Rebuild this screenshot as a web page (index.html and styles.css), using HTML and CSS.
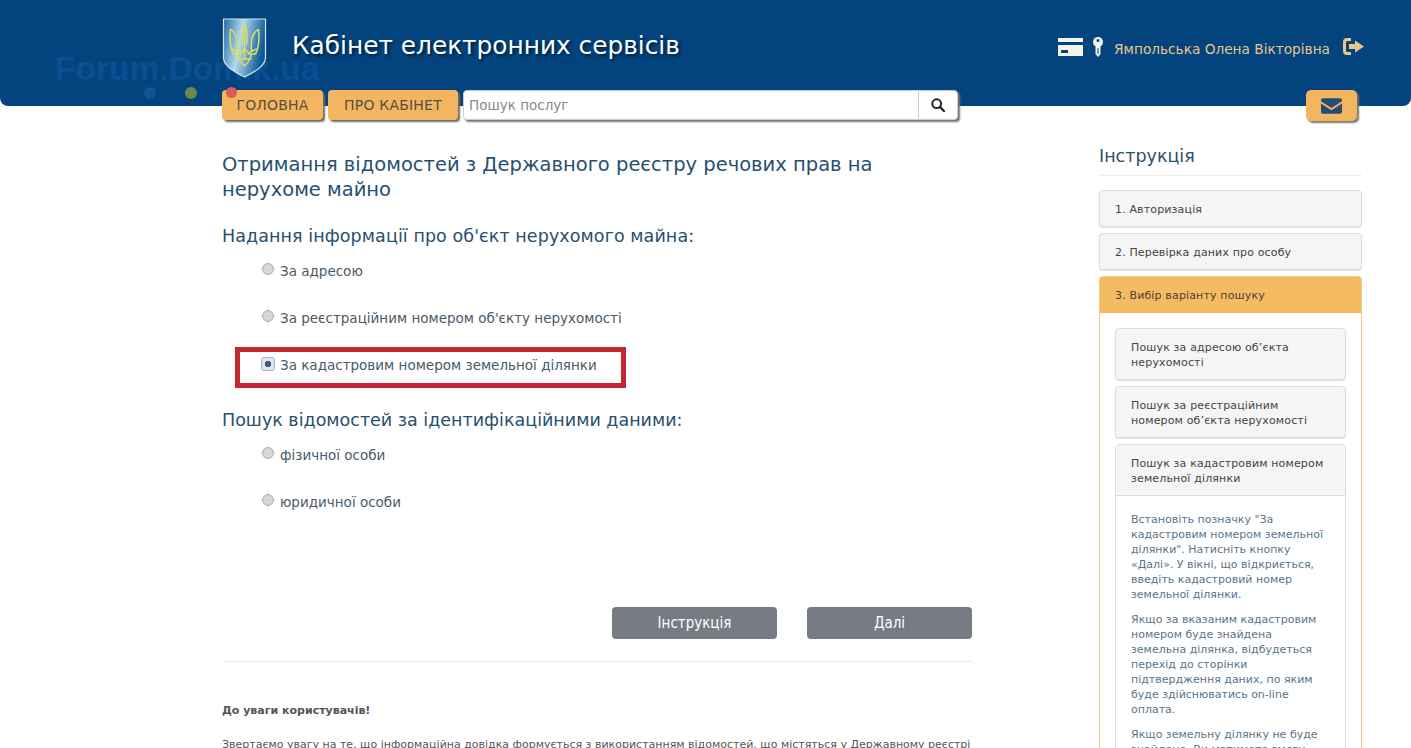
FILE: index.html
```html
<!DOCTYPE html>
<html lang="uk">
<head>
<meta charset="utf-8">
<title>Кабінет електронних сервісів</title>
<link rel="stylesheet" href="styles.css">
</head>
<body>
<header class="top">
  <div class="watermark">
    <span class="wm-text">Forum.Domik.ua</span>
    <span class="wm-dots"><i class="dot dot-blue"></i><i class="dot dot-green"></i><i class="dot dot-red"></i></span>
  </div>
  <div class="top-inner">
    <svg class="crest" viewBox="0 0 44 60" aria-hidden="true">
      <defs>
        <linearGradient id="sh" x1="0" y1="0" x2="1" y2="0.25">
          <stop offset="0" stop-color="#1c6ba6"/><stop offset="0.45" stop-color="#b4d9ee"/><stop offset="1" stop-color="#0d5a97"/>
        </linearGradient>
      </defs>
      <path d="M1 1H43V40Q43 49 22 59Q1 49 1 40Z" fill="url(#sh)" stroke="#d5e6f2" stroke-width="1.2"/>
      <path d="M22 6V42M22 6C19 13 19 20 20 27M22 6C25 13 25 20 24 27M8 11C7 20 8 30 11 36H18M36 11C37 20 36 30 33 36H26M8 11C14 15 16 24 15 33M36 11C30 15 28 24 29 33M10 31L18 35L22 31L26 35L34 31M15 36C16 43 20 46 22 48C24 46 28 43 29 36M15 41H29" fill="none" stroke="#dcdc62" stroke-width="1.5"/>
    </svg>
    <div class="brand">Кабінет електронних сервісів</div>
    <div class="user">
      <svg class="ic-card" viewBox="0 0 25 18" aria-hidden="true"><path d="M0 0H25V4H0ZM0 7H25V18H0ZM3 12V15H10V12Z" fill="#f4f6ee" fill-rule="evenodd"/></svg>
      <svg class="ic-key" viewBox="0 0 10 20" aria-hidden="true"><path d="M5 0A5 5 0 0 1 7.500 9.300V17L5 20L2.500 17V9.300A5 5 0 0 1 5 0ZM5 2A1.500 1.500 0 1 0 5 5A1.500 1.500 0 1 0 5 2ZM4.500 11V17H5.500V11Z" fill="#f4f6ee" fill-rule="evenodd"/></svg>
      <span class="user-name">Ямпольська Олена Вікторівна</span>
      <svg class="ic-exit" viewBox="0 0 21 17" aria-hidden="true"><path d="M8 0H4Q0 0 0 4V13Q0 17 4 17H8V14H4.500Q3 14 3 12.500V4.500Q3 3 4.500 3H8ZM12 2.500L21 8.500L12 14.500V11H6V6H12Z" fill="#e9c48b" fill-rule="evenodd"/></svg>
    </div>
  </div>
</header>

<div class="wrap">
  <nav class="nav">
    <a class="btn-nav">ГОЛОВНА</a>
    <a class="btn-nav btn-nav-2">ПРО КАБІНЕТ</a>
    <div class="search">
      <span class="search-field">Пошук послуг</span>
      <span class="search-btn">
        <svg viewBox="0 0 14 14" width="14" height="14" aria-hidden="true"><circle cx="5.700" cy="5.700" r="4.400" fill="none" stroke="#222" stroke-width="2"/><path d="M9 9L13 13" stroke="#222" stroke-width="2.400" stroke-linecap="round"/></svg>
      </span>
    </div>
    <a class="btn-mail">
      <svg viewBox="0 0 22 16" width="21" height="16" aria-hidden="true"><path d="M2 0H20Q22 0 22 2V3L11 10L0 3V2Q0 0 2 0ZM0 5.500L11 12.500L22 5.500V14Q22 16 20 16H2Q0 16 0 14Z" fill="#234e73"/></svg>
    </a>
  </nav>

  <div class="columns">
    <main class="main">
      <h1 class="title">Отримання відомостей з Державного реєстру речових прав на нерухоме майно</h1>

      <h2 class="subtitle subtitle-1">Надання інформації про об'єкт нерухомого майна:</h2>
      <div class="options">
        <label class="opt"><i class="radio"></i>За адресою</label>
        <label class="opt"><i class="radio"></i>За реєстраційним номером об'єкту нерухомості</label>
        <label class="opt opt-marked"><i class="radio radio-on"></i>За кадастровим номером земельної ділянки</label>
      </div>

      <h2 class="subtitle subtitle-2">Пошук відомостей за ідентифікаційними даними:</h2>
      <div class="options">
        <label class="opt"><i class="radio"></i>фізичної особи</label>
        <label class="opt"><i class="radio"></i>юридичної особи</label>
      </div>

      <div class="actions">
        <a class="btn-grey">Інструкція</a>
        <a class="btn-grey">Далі</a>
      </div>
      <hr class="rule">
      <p class="note-head">До уваги користувачів!</p>
      <p class="note">Звертаємо увагу на те, що інформаційна довідка формується з використанням відомостей, що містяться у Державному реєстрі речових прав на нерухоме майно.</p>
    </main>

    <aside class="side">
      <h3 class="side-title">Інструкція</h3>
      <div class="panel">1. Авторизація</div>
      <div class="panel">2. Перевірка даних про особу</div>
      <div class="panel-open">
        <div class="panel-open-head">3. Вибір варіанту пошуку</div>
        <div class="panel-open-body">
          <div class="panel panel-inner">Пошук за адресою об’єкта нерухомості</div>
          <div class="panel panel-inner">Пошук за реєстраційним номером об’єкта нерухомості</div>
          <div class="sub">
            <div class="sub-head">Пошук за кадастровим номером земельної ділянки</div>
            <div class="sub-body">
              <p>Встановіть позначку "За кадастровим номером земельної ділянки". Натисніть кнопку «Далі». У вікні, що відкриється, введіть кадастровий номер земельної ділянки.</p>
              <p>Якщо за вказаним кадастровим номером буде знайдена земельна ділянка, відбудеться перехід до сторінки підтвердження даних, по яким буде здійснюватись on-line оплата.</p>
              <p>Якщо земельну ділянку не буде знайдено, Ви матимете змогу повернутися назад.</p>
            </div>
          </div>
        </div>
      </div>
    </aside>
  </div>
</div>
```
FILE: styles.css
```css
* { box-sizing: border-box; }
html, body { margin: 0; height: 748px; overflow: hidden; }
body {
  background: #fff;
  font-family: "DejaVu Sans", Verdana, sans-serif;
  color: #3c5266;
}
.top {
  height: 106px;
  background: #03447e;
  border-radius: 0 0 8px 8px;
  position: relative;
}
.watermark {
  position: absolute;
  left: 55px;
  top: 52px;
  width: 270px;
}
.wm-text {
  display: block;
  font: bold 33.500px/34px "Liberation Sans", Arial, sans-serif;
  color: #0a4f93;
  white-space: nowrap;
}
.wm-dots { display: flex; gap: 29px; margin: 1px 0 0 89px; }
.dot { width: 12px; height: 12px; border-radius: 50%; }
.dot-blue { background: #0e5596; }
.dot-green { background: #6d8a45; }
.dot-red { background: #e05a58; position: relative; z-index: 3; width: 11px; height: 11px; }
.top-inner {
  position: relative;
  width: 1142px;
  margin-left: 222px;
  display: flex;
  height: 106px;
}
.crest { width: 45px; height: 60px; margin-top: 18px; }
.brand {
  margin: 31px 0 0 25px;
  font-size: 24.800px;
  line-height: 30px;
  color: #fff;
  text-shadow: 2px 2px 3px rgba(0,0,0,.55);
}
.user {
  margin: 37px 0 0 auto;
  display: flex;
  align-items: flex-start;
  height: 24px;
}
.ic-card { width: 25px; height: 18px; margin-top: 1px; }
.ic-key { width: 10px; height: 20px; margin: 0 0 0 10px; }
.user-name {
  margin: 3px 0 0 11px;
  font-size: 13.700px;
  line-height: 18px;
  color: #e9c48b;
  white-space: nowrap;
}
.ic-exit { width: 21px; height: 17px; margin: 1px 0 0 13px; }

.wrap { width: 1140px; margin: -16px 0 0 222px; position: relative; z-index: 2; }
.nav { display: flex; align-items: flex-start; height: 31px; }
.btn-nav {
  width: 101px;
  height: 30px;
  background: #f4b561;
  border-radius: 4px;
  box-shadow: 2px 2px 2px #6d6a5e;
  color: #56503f;
  font-size: 14px;
  letter-spacing: .2px;
  line-height: 30px;
  text-align: center;
}
.btn-nav-2 { width: 130px; margin-left: 5px; }
.search {
  display: flex;
  width: 495px;
  height: 30px;
  margin-left: 5px;
  background: #fff;
  border: 1px solid #ccc;
  border-radius: 4px;
  box-shadow: 2px 2px 2px #77756c;
}
.search-field { flex: 1; padding-left: 5px; font-size: 13.500px; line-height: 28px; color: #888; }
.search-btn {
  width: 39px;
  border-left: 1px solid #ccc;
  display: flex;
  align-items: center;
  justify-content: center;
}
.btn-mail {
  margin-left: auto;
  margin-right: 5px;
  width: 51px;
  height: 31px;
  background: #f4b561;
  border-radius: 5px;
  box-shadow: 2px 2px 2px #77756c;
  display: flex;
  align-items: center;
  justify-content: center;
}
.columns { display: flex; justify-content: space-between; }
.main { width: 750px; padding-top: 31px; }
.title {
  margin: 0;
  font-size: 19.500px;
  line-height: 25px;
  font-weight: 400;
  color: #27506f;
}
.subtitle {
  margin: 22px 0 0;
  font-size: 17.500px;
  line-height: 25px;
  font-weight: 400;
  color: #27506f;
}
.subtitle-1 { letter-spacing: .08px; }
.subtitle-2 { margin-top: 33px; }
.options { display: flex; flex-direction: column; gap: 27px; margin-top: 12px; padding-left: 40px; }
.opt {
  display: flex;
  align-items: center;
  height: 20px;
  font-size: 13.500px;
  color: #4a5a68;
  position: relative;
}
.opt-marked::after {
  content: "";
  box-sizing: border-box;
  position: absolute;
  left: -27px;
  top: -8px;
  width: 391px;
  height: 41px;
  border: 5px solid #c5262f;
}
.radio {
  width: 12px;
  height: 12px;
  margin: -5px 6px 0 0;
  border-radius: 50%;
  background: #d5d8da;
  border: 1px solid #a6abaf;
  display: block;
}
.radio-on {
  width: 14px;
  height: 14px;
  margin: -3px 5px 0 -1px;
  border-radius: 3px;
  background: radial-gradient(circle, #4a5a68 0 3px, #dfe6ee 3.500px);
  border-color: #9eb8d3;
}
.actions { display: flex; justify-content: flex-end; gap: 30px; margin-top: 95px; }
.btn-grey {
  width: 165px;
  height: 32px;
  background: #777c84;
  border-radius: 4px;
  color: #fff;
  font: 15px/32px "DejaVu Sans Condensed", "DejaVu Sans", sans-serif;
  text-align: center;
}
.rule { border: 0; border-top: 1px solid #e9ebec; margin: 22px 0 0; }
.note-head { margin: 42px 0 0; font-size: 11px; line-height: 14px; font-weight: 700; color: #555; }
.note { margin: 19px 0 0; font-size: 11px; line-height: 15px; color: #555; }

.side { width: 263px; padding-top: 25px; }
.side-title {
  margin: 0 0 14px;
  padding-bottom: 8px;
  border-bottom: 1px solid #eee;
  font-size: 17.500px;
  line-height: 21px;
  font-weight: 400;
  color: #2c5169;
}
.panel {
  height: 37px;
  margin-bottom: 6px;
  padding: 0 15px;
  background: #f5f5f5;
  border: 1px solid #ddd;
  border-radius: 4px;
  box-shadow: 0 1px 1px rgba(0,0,0,.12);
  font-size: 11px;
  letter-spacing: .15px;
  line-height: 37px;
  color: #444;
}
.panel-open { border: 1px solid #f0c98a; border-radius: 4px; }
.panel-open-head {
  height: 36px;
  padding: 0 15px;
  background: #f5bb62;
  font-size: 11px;
  letter-spacing: .15px;
  line-height: 37px;
  color: #4e4230;
}
.panel-open-body { padding: 15px; }
.panel-inner { height: 52px; line-height: 15px; padding: 11px 15px 0; }
.sub { border: 1px solid #ddd; border-radius: 4px; }
.sub-head {
  padding: 11px 15px 0;
  height: 51px;
  background: #f5f5f5;
  border-bottom: 1px solid #ddd;
  font-size: 11px;
  letter-spacing: .15px;
  line-height: 15px;
  color: #444;
}
.sub-body { padding: 16px 15px; font-size: 11px; line-height: 15px; color: #5a7488; }
.sub-body p { margin: 0 0 10px; }
```
